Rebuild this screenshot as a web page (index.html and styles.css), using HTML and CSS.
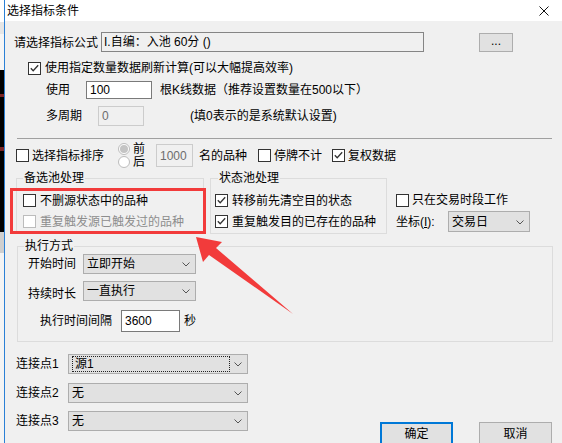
FILE: index.html
```html
<!DOCTYPE html>
<html>
<head>
<meta charset="utf-8">
<title>选择指标条件</title>
<link rel="stylesheet" href="styles.css">
</head>
<body>
<div class="desk"></div>
<div class="dialog">
  <div class="titlebar">
    <span class="title">选择指标条件</span>
    <svg class="close" viewBox="0 0 10 10"><path d="M0.5 0.5 L9.5 9.5 M9.5 0.5 L0.5 9.5" stroke="#111" stroke-width="1" fill="none"/></svg>
  </div>
  <div class="content">
    <div class="row r-formula">
      <span class="lbl w87">请选择指标公式</span>
      <div class="textbox ro">I.自编：入池 60分 ()</div>
      <div class="btn dots">...</div>
    </div>

    <div class="row r-use">
      <span class="cb checked"><svg viewBox="0 0 11 11"><path d="M1.8 5.2 L4.2 7.8 L9.2 2.2" fill="none" stroke="#333" stroke-width="1.3"/></svg></span>
      <span class="cbt">使用指定数量数据刷新计算(可以大幅提高效率)</span>
    </div>

    <div class="row r-count">
      <span class="lbl w40">使用</span>
      <div class="textbox edit w66">100</div>
      <span class="after8">根K线数据（推荐设置数量在500以下）</span>
    </div>

    <div class="row r-period">
      <span class="lbl w52">多周期</span>
      <div class="textbox dis w46">0</div>
      <span class="after46">(填0表示的是系统默认设置)</span>
    </div>

    <div class="sep"></div>

    <div class="row r-sort">
      <span class="cb"></span>
      <span class="cbt w86">选择指标排序</span>
      <div class="radios">
        <div class="radio-item"><span class="radio on"></span><span>前</span></div>
        <div class="radio-item"><span class="radio"></span><span>后</span></div>
      </div>
      <div class="textbox dis w37 h23">1000</div>
      <span class="after6">名的品种</span>
      <span class="cb ml11"></span>
      <span class="cbt">停牌不计</span>
      <span class="cb checked ml10"><svg viewBox="0 0 11 11"><path d="M1.8 5.2 L4.2 7.8 L9.2 2.2" fill="none" stroke="#333" stroke-width="1.3"/></svg></span>
      <span class="cbt">复权数据</span>
    </div>

    <div class="groups">
      <fieldset class="grp g-pool">
        <legend>备选池处理</legend>
        <div class="grow"><span class="cb"></span><span class="cbt">不删源状态中的品种</span></div>
        <div class="grow"><span class="cb disabled"></span><span class="cbt dim-text">重复触发源已触发过的品种</span></div>
      </fieldset>
      <fieldset class="grp g-state">
        <legend>状态池处理</legend>
        <div class="grow"><span class="cb checked"><svg viewBox="0 0 11 11"><path d="M1.8 5.2 L4.2 7.8 L9.2 2.2" fill="none" stroke="#333" stroke-width="1.3"/></svg></span><span class="cbt">转移前先清空目的状态</span></div>
        <div class="grow"><span class="cb checked"><svg viewBox="0 0 11 11"><path d="M1.8 5.2 L4.2 7.8 L9.2 2.2" fill="none" stroke="#333" stroke-width="1.3"/></svg></span><span class="cbt">重复触发目的已存在的品种</span></div>
      </fieldset>
      <div class="rcol">
        <div class="row rc1"><span class="cb"></span><span class="cbt">只在交易时段工作</span></div>
        <div class="row rc2">
          <span class="lbl w52">坐标(<u>I</u>):</span>
          <div class="select w82 h21"><span class="sel-text">交易日</span><svg class="chev" viewBox="0 0 8 5"><path d="M0.5 0.5 L4 4 L7.5 0.5" fill="none" stroke="#555" stroke-width="1"/></svg></div>
        </div>
      </div>
    </div>

    <fieldset class="grp g-exec">
      <legend>执行方式</legend>
      <div class="row e1">
        <span class="lbl w55">开始时间</span>
        <div class="select w113 h20"><span class="sel-text">立即开始</span><svg class="chev" viewBox="0 0 8 5"><path d="M0.5 0.5 L4 4 L7.5 0.5" fill="none" stroke="#555" stroke-width="1"/></svg></div>
      </div>
      <div class="row e2">
        <span class="lbl w55">持续时长</span>
        <div class="select w113 h20"><span class="sel-text">一直执行</span><svg class="chev" viewBox="0 0 8 5"><path d="M0.5 0.5 L4 4 L7.5 0.5" fill="none" stroke="#555" stroke-width="1"/></svg></div>
      </div>
      <div class="row e3">
        <span class="lbl w81">执行时间间隔</span>
        <div class="textbox edit w59 h22">3600</div>
        <span class="after4">秒</span>
      </div>
    </fieldset>

    <div class="bottom">
      <div class="conns">
        <div class="row c1">
          <span class="lbl w52">连接点1</span>
          <div class="select w180 h20"><span class="focus">源1</span><svg class="chev" viewBox="0 0 8 5"><path d="M0.5 0.5 L4 4 L7.5 0.5" fill="none" stroke="#555" stroke-width="1"/></svg></div>
        </div>
        <div class="row c2">
          <span class="lbl w52">连接点2</span>
          <div class="select w180 h20"><span class="sel-text">无</span><svg class="chev" viewBox="0 0 8 5"><path d="M0.5 0.5 L4 4 L7.5 0.5" fill="none" stroke="#555" stroke-width="1"/></svg></div>
        </div>
        <div class="row c3">
          <span class="lbl w52">连接点3</span>
          <div class="select w180 h20"><span class="sel-text">无</span><svg class="chev" viewBox="0 0 8 5"><path d="M0.5 0.5 L4 4 L7.5 0.5" fill="none" stroke="#555" stroke-width="1"/></svg></div>
        </div>
      </div>
      <div class="actions">
        <div class="btn push default">确定</div>
        <div class="btn push cancel">取消</div>
      </div>
    </div>
  </div>
</div>

<div class="highlight"></div>
<svg class="arrow" viewBox="0 0 562 443"><polygon points="196,237 222,242 216,248 293,314 209,255 203,262" fill="#f23b3b"/></svg>
</body>
</html>
```
FILE: styles.css
```css
* { box-sizing: border-box; }
html, body { margin: 0; padding: 0; }
body {
  width: 562px;
  height: 443px;
  overflow: hidden;
  display: flex;
  position: relative;
  font-family: "Liberation Sans", "Noto Sans CJK SC", sans-serif;
  font-size: 12px;
  line-height: 14px;
  color: #000;
  background: #f0f0f0;
}
.desk {
  width: 5px;
  flex: none;
  border-right: 1px solid #2b80d6;
  background: linear-gradient(to bottom,
    #ffffff 0, #ffffff 22px,
    #e6e6e6 22px, #e6e6e6 34px,
    #f6f6f6 34px, #f6f6f6 70px,
    #000 70px, #000 94px,
    #7a2424 94px, #7a2424 97px,
    #000 97px, #000 147px,
    #7a2424 147px, #7a2424 151px,
    #000 151px, #000 232px,
    #cfcfcf 232px, #cfcfcf 253px,
    #f4f4f4 253px);
}
.dialog { flex: 1; display: flex; flex-direction: column; }
.titlebar {
  height: 21px;
  flex: none;
  background: #fff;
  display: flex;
  align-items: center;
  justify-content: space-between;
  padding: 0 13px 0 2px;
}
.title { font-size: 12px; }
.close { width: 10px; height: 10px; display: block; }
.content { flex: 1; display: flex; flex-direction: column; align-items: flex-start; background: #f0f0f0; }

.row { display: flex; align-items: center; }
.lbl { flex: none; white-space: nowrap; }
.w40 { width: 40px; } .w52 { width: 52px; } .w55 { width: 55px; } .w81 { width: 81px; }
.w86 { width: 86px; } .w87 { width: 87px; }
.w66 { width: 66px; } .w46 { width: 46px; } .w37 { width: 37px; } .w59 { width: 59px; }
.w82 { width: 82px; } .w113 { width: 113px; } .w180 { width: 180px; }
.h20 { height: 20px; } .h21 { height: 21px; } .h22 { height: 22px; } .h23 { height: 23px; }
.after8 { margin-left: 8px; white-space: nowrap; }
.after46 { margin-left: 46px; white-space: nowrap; }
.after6 { margin-left: 6px; white-space: nowrap; }
.after4 { margin-left: 4px; }
.ml11 { margin-left: 11px; } .ml10 { margin-left: 10px; }

.textbox {
  flex: none;
  display: flex;
  align-items: center;
  padding-left: 3px;
  border: 1px solid #7a7a7a;
  white-space: nowrap;
}
.textbox.ro { width: 323px; height: 20px; background: #f0f0f0; border-color: #858585; padding-left: 2px; }
.textbox.edit { background: #fff; }
.textbox.dis { background: #f0f0f0; border-color: #cccccc; color: #6d6d6d; height: 20px; }
.textbox.w66 { height: 18px; }

.btn {
  flex: none;
  display: flex;
  align-items: center;
  justify-content: center;
  background: #e1e1e1;
  border: 1px solid #adadad;
}
.dots { width: 34px; height: 19px; margin-left: 55px; align-self: flex-start; margin-top: 1px; padding-bottom: 3px; }

.r-formula { margin-top: 11px; padding-left: 9px; height: 20px; align-items: flex-start; }
.r-formula .lbl { align-self: center; padding-top: 2px; }
.r-use { margin-top: 8px; padding-left: 23px; height: 16px; }
.r-count { margin-top: 5px; padding-left: 41px; height: 18px; }
.r-period { margin-top: 7px; padding-left: 41px; height: 20px; }

.cb {
  flex: none;
  width: 13px;
  height: 13px;
  border: 1px solid #333;
  background: #fff;
  display: flex;
  align-items: center;
  justify-content: center;
}
.cb svg { width: 11px; height: 11px; display: block; }
.cb.disabled { border-color: #bcbcbc; }
.cbt { margin-left: 4px; white-space: nowrap; }
.dim-text { color: #8d8d8d; }

.sep { margin: 12px 0 0 12px; width: 535px; height: 1px; background: #a0a0a0; flex: none; }

.r-sort { margin-top: 3px; padding-left: 11px; height: 27px; }
.r-sort .cbt { margin-left: 3px; }
.radios { display: flex; flex-direction: column; width: 38px; height: 27px; flex: none; }
.radio-item { display: flex; align-items: center; height: 13.5px; }
.radio {
  width: 12px; height: 12px;
  border: 1px solid #bcbcbc;
  border-radius: 50%;
  background: #fff;
  margin-right: 3px;
  display: flex; align-items: center; justify-content: center;
}
.radio.on::after { content: ""; width: 8px; height: 8px; border-radius: 50%; background: #c4c4c4; }
.textbox.h23 { height: 23px; }

.groups { display: flex; margin-top: 2px; padding-left: 11px; align-items: flex-start; }
.grp {
  margin: 0;
  border: 1px solid #dcdcdc;
  min-width: 0;
}
.grp legend { padding: 0 1px; line-height: 14px; }
.g-pool { width: 188px; height: 63px; padding: 5px 0 1px 6px; }
.g-state { width: 177px; height: 63px; padding: 5px 0 1px 4px; margin-left: 6px; }
.g-state legend { margin-left: 3px; }
.grow { display: flex; align-items: center; height: 21px; }
.rcol { display: flex; flex-direction: column; margin-left: 9px; }
.rc1 { margin-top: 19px; height: 20px; }
.rc1 .cbt { margin-left: 3px; }
.rc2 { margin-top: 1px; }

.select {
  flex: none;
  position: relative;
  display: flex;
  align-items: center;
  background: #e1e1e1;
  border: 1px solid #adadad;
  padding-left: 3px;
}
.sel-text { white-space: nowrap; }
.chev { position: absolute; right: 5px; top: 50%; margin-top: -2px; width: 8px; height: 5px; }
.focus {
  width: 158px;
  height: 16px;
  border: 1px dotted #222;
  display: flex; align-items: center;
  padding-left: 2px;
}

.g-exec { margin: 5px 0 0 12px; width: 536px; height: 103px; padding: 1px 0 8px 6px; }
.g-exec legend { padding: 0 1px; }
.e1 { padding-left: 4px; height: 20px; }
.e2 { padding-left: 4px; height: 20px; margin-top: 7px; align-items: flex-end; }
.e2 .select { align-self: center; }
.e3 { padding-left: 16px; height: 22px; margin-top: 9px; }

.bottom { display: flex; align-items: flex-start; margin-top: 12px; }
.conns { display: flex; flex-direction: column; padding-left: 11px; }
.c1 { height: 20px; }
.c2 { height: 20px; margin-top: 9px; }
.c3 { height: 20px; margin-top: 8px; }
.actions { display: flex; margin-left: 132px; margin-top: 68px; }
.push { width: 73px; height: 23px; }
.push.default { border: 2px solid #0078d7; }
.push.cancel { margin-left: 26px; }

.highlight {
  position: absolute;
  left: 10px; top: 188px;
  width: 196px; height: 46px;
  border: 3px solid #f23b3b;
  pointer-events: none;
}
.arrow {
  position: absolute;
  left: 0; top: 0;
  width: 562px; height: 443px;
  pointer-events: none;
}
```
